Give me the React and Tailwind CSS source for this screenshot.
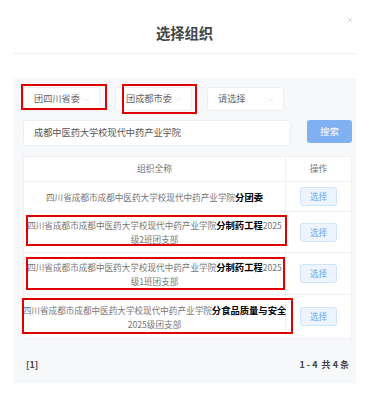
import React from 'react';
import { ChevronDown, X } from 'lucide-react';

const font = { fontFamily: '"Noto Sans CJK SC", "Noto Sans", sans-serif' };

const Select = ({ label }) => (
  <div className="flex items-center justify-between w-[77px] h-[24px] pl-[10px] pr-[8px] bg-white border border-[#eceef2] rounded-[3px] text-[9.2px] text-[#666]">
    <span>{label}</span>
    <ChevronDown size={9} strokeWidth={1.2} color="#c0c4cc" />
  </div>
);

const PickButton = () => (
  <button className="w-[37px] h-[19px] rounded-[3px] bg-[#ecf5ff] border border-[#cfe3f9] text-[8.6px] text-[#6fa6ea]">
    选择
  </button>
);

const rows = [
  { h: 'h-[30px]', lines: [['四川省成都市成都中医药大学校现代中药产业学院', '分团委', '']] },
  { h: 'h-[41px]', lines: [['四川省成都市成都中医药大学校现代中药产业学院', '分制药工程', '2025'], ['级2班团支部']] },
  { h: 'h-[42px]', lines: [['四川省成都市成都中医药大学校现代中药产业学院', '分制药工程', '2025'], ['级1班团支部']] },
  { h: 'h-[43px]', lines: [['四川省成都市成都中医药大学校现代中药产业学院', '分食品质量与安全', ''], ['2025级团支部']] },
];

export default function App() {
  return (
    <div className="relative w-[369px] h-[402px] bg-white overflow-hidden" style={font}>
      <div className="mx-[12px] h-[54px] border-b border-[#f1f2f4] flex justify-center pt-[24px]">
        <h2 className="text-[14.3px] leading-[18px] font-bold text-[#444]">选择组织</h2>
      </div>
      <X size={8} strokeWidth={1.3} color="#aaa" className="absolute left-[346px] top-[16px]" />

      <div className="mt-[24px] mx-[13px] h-[305px] bg-[#f7f8fa] pt-[9px] pl-[10px] pr-[4px]">
        <div className="flex gap-[15px]">
          <Select label="团四川省委" />
          <Select label="团成都市委" />
          <Select label="请选择" />
        </div>

        <div className="flex items-start mt-[9px]">
          <div className="w-[268px] h-[26px] bg-white border border-[#eceef2] rounded-[3px] flex items-center pl-[10px] text-[9.2px] text-[#555]">
            成都中医药大学校现代中药产业学院
          </div>
          <button className="ml-[16px] w-[45px] h-[23px] rounded-[3px] bg-[#7fb0f2] text-white text-[9.5px]">搜索</button>
        </div>

        <div className="mt-[10px] w-[329px] bg-white border border-[#f0f1f4]">
          <div className="flex h-[25px] border-b border-[#f0f1f4] text-[8.8px] text-[#777]">
            <div className="w-[262px] flex items-center justify-center border-r border-[#f0f1f4]">组织全称</div>
            <div className="flex-1 flex items-center justify-center">操作</div>
          </div>
          {rows.map((r, i) => (
            <div key={i} className={`flex ${r.h} ${i < rows.length - 1 ? 'border-b border-[#f0f1f4]' : ''}`}>
              <div className="w-[262px] flex flex-col items-center justify-center border-r border-[#f0f1f4] text-[8.6px] leading-[14px] text-[#777]">
                {r.lines.map((l, j) => (
                  <div key={j} className="whitespace-nowrap">
                    {l[0]}
                    {l[1] && <span className="font-bold text-black text-[9.3px]">{l[1]}</span>}
                    {l[2]}
                  </div>
                ))}
              </div>
              <div className="flex-1 flex items-center justify-center">
                <PickButton />
              </div>
            </div>
          ))}
        </div>

        <div className="flex justify-between items-center mt-[19px] pl-[3px] pr-[3px] text-[9px] font-bold text-[#444]">
          <span>[1]</span>
          <span>1 - 4&nbsp; 共 4 条</span>
        </div>
      </div>

      <div className="absolute left-[21px] top-[84px] w-[86px] h-[26px] border-2 border-[#e00000]" />
      <div className="absolute left-[122px] top-[84px] w-[75px] h-[30px] border-2 border-[#e00000]" />
      <div className="absolute left-[26px] top-[215px] w-[261px] h-[31px] border-2 border-[#e00000]" />
      <div className="absolute left-[26px] top-[257px] w-[259px] h-[33px] border-2 border-[#e00000]" />
      <div className="absolute left-[22px] top-[298px] w-[271px] h-[36px] border-2 border-[#e00000]" />
    </div>
  );
}
